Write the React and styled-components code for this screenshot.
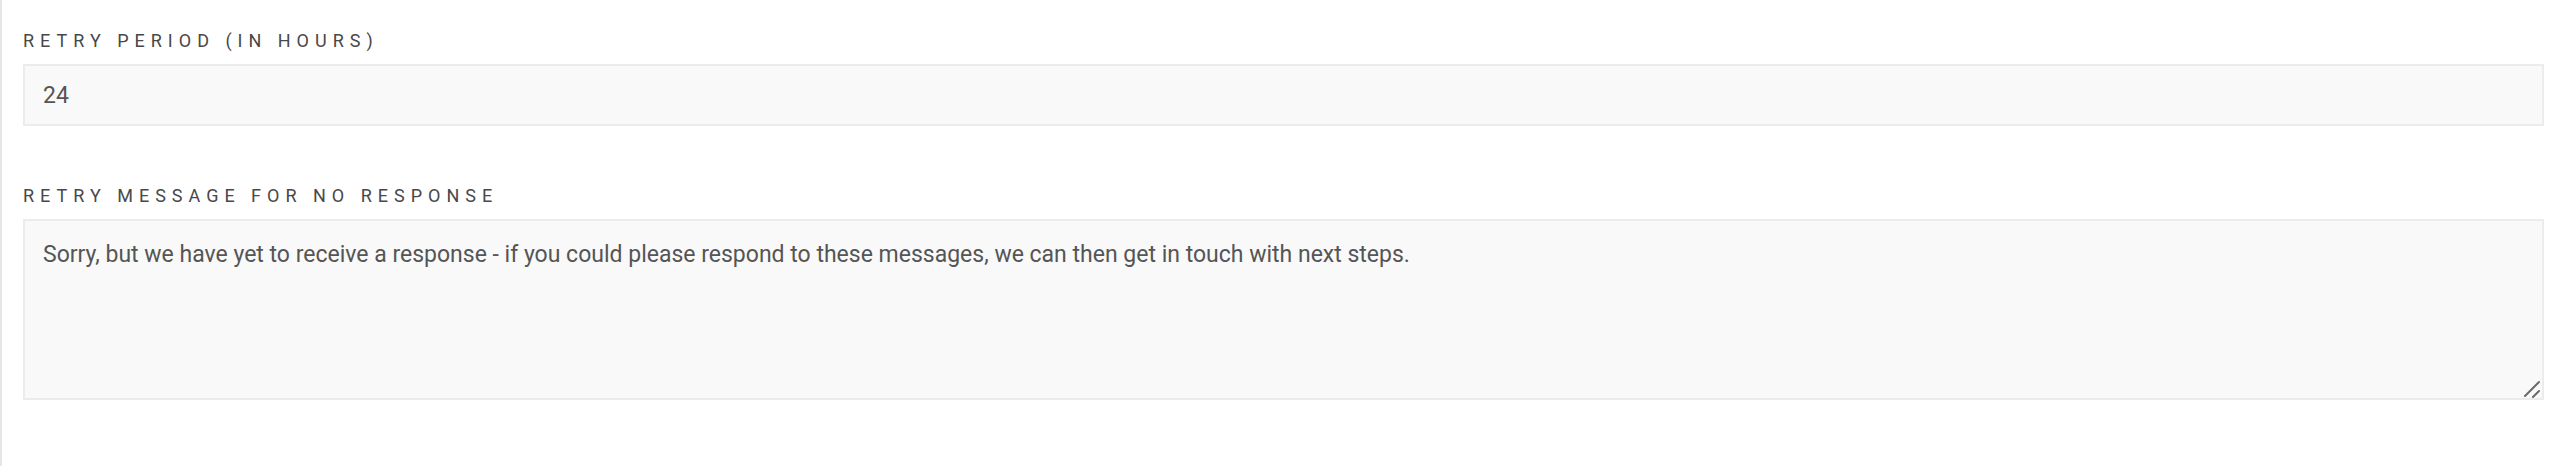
import styled, { createGlobalStyle } from 'styled-components';

const GlobalStyle = createGlobalStyle`
  body {
    margin: 0;
    background: #fff;
    font-family: Roboto, "Liberation Sans", sans-serif;
  }
`;

function App() {
  return (
    <>
      <GlobalStyle />
      <Panel>
        <Field>
          <Label>Retry period (in hours)</Label>
          <Input defaultValue="24" />
        </Field>
        <Field>
          <Label>Retry message for no response</Label>
          <AreaWrap>
            <TextArea defaultValue="Sorry, but we have yet to receive a response - if you could please respond to these messages, we can then get in touch with next steps." />
            <Grip width="20" height="20" viewBox="0 0 20 20">
              <path d="M4 18 L18 4 M12 19 L18 13" stroke="#6a6a6a" strokeWidth="2" strokeLinecap="round" />
            </Grip>
          </AreaWrap>
        </Field>
      </Panel>
    </>
  );
}

const Panel = styled.div`
  min-height: 466px;
  box-sizing: border-box;
  border-left: 2px solid #e6e6e6;
  padding: 27px 26px 0 21px;
  display: flex;
  flex-direction: column;
  gap: 56px;
`;

const Field = styled.div`
  display: flex;
  flex-direction: column;
`;

const Label = styled.label`
  font-size: 18px;
  line-height: 28px;
  letter-spacing: 6px;
  text-transform: uppercase;
  color: #484848;
  margin-bottom: 9px;
`;

const Input = styled.input`
  box-sizing: border-box;
  height: 62px;
  padding: 0 18px;
  border: 2px solid #ececec;
  background: #f9f9f9;
  font-family: Roboto, "Liberation Sans", sans-serif;
  font-size: 23px;
  color: #555;
  &:focus {
    outline: none;
  }
`;

const AreaWrap = styled.div`
  position: relative;
  display: flex;
`;

const TextArea = styled.textarea`
  flex: 1;
  box-sizing: border-box;
  height: 181px;
  padding: 17px 18px;
  border: 2px solid #ececec;
  background: #f9f9f9;
  font-family: Roboto, "Liberation Sans", sans-serif;
  font-size: 23px;
  line-height: 1.5;
  color: #555;
  resize: none;
  &:focus {
    outline: none;
  }
`;

const Grip = styled.svg`
  position: absolute;
  right: 3px;
  bottom: 2px;
  pointer-events: none;
`;

export default App;
